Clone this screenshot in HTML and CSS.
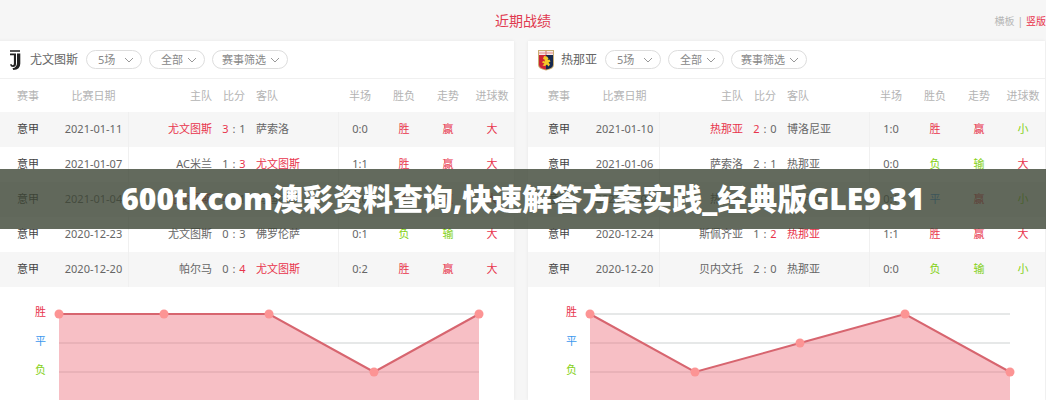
FILE: index.html
```html
<!DOCTYPE html>
<html lang="zh-CN">
<head>
<meta charset="utf-8">
<meta name="viewport" content="width=device-width, initial-scale=1">
<title>近期战绩</title>
<link rel="stylesheet" href="styles.css">
</head>
<body>
<header class="topbar">
  <h2 class="section-title">近期战绩</h2>
  <nav class="modes"><a href="#h">横板</a><span>|</span><a href="#v" class="active">竖版</a></nav>
</header>
<main class="panels">
  <section class="panel">
    <div class="team-bar">
      <svg class="crest" viewBox="0 0 16 22" aria-hidden="true"><path d="M3 1h10v2H3z" fill="#555"/><path d="M3 4.500h6v10.500q0 3-3 3-2.500 0-3-2.500l1.500-.5q.3 1.200 1.300 1.200 1.100 0 1.100-1.700V6.300H3z" fill="#222"/><path d="M10 4.500h3.300v10q0 6-7 6.500l-.8-1.700Q10 18.500 10 14z" fill="#222"/></svg>
      <h3 class="team">尤文图斯</h3>
      <div class="filters">
        <span class="pill"><select class="games" aria-label="场数"><option>5场</option></select><svg viewBox="0 0 10 6"><path d="M1 1l4 4 4-4"/></svg></span>
        <span class="pill"><select class="venue" aria-label="主客场"><option>全部</option></select><svg viewBox="0 0 10 6"><path d="M1 1l4 4 4-4"/></svg></span>
        <span class="pill"><select class="league" aria-label="赛事"><option>赛事筛选</option></select><svg viewBox="0 0 10 6"><path d="M1 1l4 4 4-4"/></svg></span>
      </div>
    </div>
    <table class="results">
      <colgroup><col class="c-league"><col class="c-date"><col class="c-home"><col class="c-score"><col><col class="c-mark"><col class="c-mark"><col class="c-mark"><col class="c-mark"></colgroup>
      <thead><tr><th>赛事</th><th>比赛日期</th><th class="home">主队</th><th>比分</th><th class="away">客队</th><th>半场</th><th>胜负</th><th>走势</th><th>进球数</th></tr></thead>
      <tbody>
        <tr><td class="lg">意甲</td><td class="date">2021-01-11</td><td class="home red">尤文图斯</td><td class="score"><b class="red">3</b> : <b>1</b></td><td class="away">萨索洛</td><td class="half">0:0</td><td class="red">胜</td><td class="red">赢</td><td class="red">大</td></tr>
        <tr><td class="lg">意甲</td><td class="date">2021-01-07</td><td class="home">AC米兰</td><td class="score"><b>1</b> : <b class="red">3</b></td><td class="away red">尤文图斯</td><td class="half">1:1</td><td class="red">胜</td><td class="red">赢</td><td class="red">大</td></tr>
        <tr><td class="lg">意甲</td><td class="date">2021-01-04</td><td class="home red">尤文图斯</td><td class="score"><b class="red">4</b> : <b>1</b></td><td class="away">乌迪内斯</td><td class="half">2:0</td><td class="red">胜</td><td class="red">赢</td><td class="red">大</td></tr>
        <tr><td class="lg">意甲</td><td class="date">2020-12-23</td><td class="home">尤文图斯</td><td class="score"><b>0</b> : <b>3</b></td><td class="away">佛罗伦萨</td><td class="half">0:1</td><td class="green">负</td><td class="green">输</td><td class="red">大</td></tr>
        <tr><td class="lg">意甲</td><td class="date">2020-12-20</td><td class="home">帕尔马</td><td class="score"><b>0</b> : <b class="red">4</b></td><td class="away red">尤文图斯</td><td class="half">0:2</td><td class="red">胜</td><td class="red">赢</td><td class="red">大</td></tr>
      </tbody>
    </table>
    <div class="chart">
      <div class="axis"><span class="red">胜</span><span class="blue">平</span><span class="green">负</span></div>
      <svg class="plot" role="img" aria-label="尤文图斯走势">
        <g class="grid"><line x1="0" x2="100%" y1="27" y2="27"/><line x1="0" x2="100%" y1="56" y2="56"/><line x1="0" x2="100%" y1="85" y2="85"/></g>
        <svg width="100%" height="113" viewBox="0 0 400 113" preserveAspectRatio="none"><path class="area" d="M0 27H200L300 85 400 27V113H0z"/><path class="trend" d="M0 27H200L300 85 400 27"/></svg>
        <g class="dots"><circle cx="0" cy="27" r="4.500"/><circle cx="25%" cy="27" r="4.500"/><circle cx="50%" cy="27" r="4.500"/><circle cx="75%" cy="85" r="4.500"/><circle cx="100%" cy="27" r="4.500"/></g>
      </svg>
    </div>
  </section>
  <section class="panel">
    <div class="team-bar">
      <svg class="crest" viewBox="0 0 16 22" aria-hidden="true"><path d="M0 1h16v15q0 4-8 5.500Q0 20 0 16z" fill="#c9ad72"/><path d="M1 6h7v14.500Q1 19 1 16z" fill="#ce2434"/><path d="M8 6h7v10q0 3-7 4.500z" fill="#16294f"/><path d="M1 2h14v4H1z" fill="#f8e8e6"/><path d="M7.300 2h1.400v4H7.300zM1 3.500h14v1H1z" fill="#df8b8b"/><path d="M6 7l3 .5 1.500 2-1 1.500 2-.5 1 2-2 1 1.500 2-1.500 2-1.500-2-2 1.500-2.500-.5 2-2-2.500-1 1-1.500 2 .5-.5-2-1.500-.5z" fill="#f5c928"/></svg>
      <h3 class="team">热那亚</h3>
      <div class="filters">
        <span class="pill"><select class="games" aria-label="场数"><option>5场</option></select><svg viewBox="0 0 10 6"><path d="M1 1l4 4 4-4"/></svg></span>
        <span class="pill"><select class="venue" aria-label="主客场"><option>全部</option></select><svg viewBox="0 0 10 6"><path d="M1 1l4 4 4-4"/></svg></span>
        <span class="pill"><select class="league" aria-label="赛事"><option>赛事筛选</option></select><svg viewBox="0 0 10 6"><path d="M1 1l4 4 4-4"/></svg></span>
      </div>
    </div>
    <table class="results">
      <colgroup><col class="c-league"><col class="c-date"><col class="c-home"><col class="c-score"><col><col class="c-mark"><col class="c-mark"><col class="c-mark"><col class="c-mark"></colgroup>
      <thead><tr><th>赛事</th><th>比赛日期</th><th class="home">主队</th><th>比分</th><th class="away">客队</th><th>半场</th><th>胜负</th><th>走势</th><th>进球数</th></tr></thead>
      <tbody>
        <tr><td class="lg">意甲</td><td class="date">2021-01-10</td><td class="home red">热那亚</td><td class="score"><b class="red">2</b> : <b>0</b></td><td class="away">博洛尼亚</td><td class="half">1:0</td><td class="red">胜</td><td class="red">赢</td><td class="green">小</td></tr>
        <tr><td class="lg">意甲</td><td class="date">2021-01-06</td><td class="home">萨索洛</td><td class="score"><b>2</b> : <b>1</b></td><td class="away">热那亚</td><td class="half">0:0</td><td class="green">负</td><td class="green">输</td><td class="red">大</td></tr>
        <tr><td class="lg">意甲</td><td class="date">2021-01-03</td><td class="home">热那亚</td><td class="score"><b>1</b> : <b>1</b></td><td class="away">拉齐奥</td><td class="half">0:1</td><td class="blue">平</td><td class="red">赢</td><td class="green">小</td></tr>
        <tr><td class="lg">意甲</td><td class="date">2020-12-24</td><td class="home">斯佩齐亚</td><td class="score"><b>1</b> : <b class="red">2</b></td><td class="away red">热那亚</td><td class="half">1:1</td><td class="red">胜</td><td class="red">赢</td><td class="red">大</td></tr>
        <tr><td class="lg">意甲</td><td class="date">2020-12-20</td><td class="home">贝内文托</td><td class="score"><b>2</b> : <b>0</b></td><td class="away">热那亚</td><td class="half">0:0</td><td class="green">负</td><td class="green">输</td><td class="green">小</td></tr>
      </tbody>
    </table>
    <div class="chart">
      <div class="axis"><span class="red">胜</span><span class="blue">平</span><span class="green">负</span></div>
      <svg class="plot" role="img" aria-label="热那亚走势">
        <g class="grid"><line x1="0" x2="100%" y1="27" y2="27"/><line x1="0" x2="100%" y1="56" y2="56"/><line x1="0" x2="100%" y1="85" y2="85"/></g>
        <svg width="100%" height="113" viewBox="0 0 400 113" preserveAspectRatio="none"><path class="area" d="M0 27L100 85 200 56 300 27 400 85V113H0z"/><path class="trend" d="M0 27L100 85 200 56 300 27 400 85"/></svg>
        <g class="dots"><circle cx="0" cy="27" r="4.500"/><circle cx="25%" cy="85" r="4.500"/><circle cx="50%" cy="56" r="4.500"/><circle cx="75%" cy="27" r="4.500"/><circle cx="100%" cy="85" r="4.500"/></g>
      </svg>
    </div>
  </section>
</main>
<h1 class="banner">600tkcom澳彩资料查询,快速解答方案实践_经典版GLE9.31</h1>
</body>
</html>
```
FILE: styles.css
```css
* { box-sizing: border-box; }
body {
  margin: 0;
  position: relative;
  overflow-x: hidden;
  background: #f6f6f6;
  color: #666;
  font: 11px/16px "Noto Sans", "Noto Sans CJK SC", sans-serif;
}
h1, h2, h3 { margin: 0; font-weight: 400; }

.topbar {
  display: grid;
  grid-template-columns: 1fr auto 1fr;
  align-items: center;
  height: 41px;
}
.section-title {
  grid-column: 2;
  color: #e0394f;
  font-size: 14px;
  line-height: 20px;
}
.modes {
  display: flex;
  justify-content: flex-end;
  gap: 3px;
  color: #aaa;
  font-size: 10px;
}
.modes a { color: #b5b5b5; text-decoration: none; }
.modes .active { color: #e8344c; }

.panels {
  display: grid;
  grid-template-columns: 1fr 1fr;
  gap: 14px;
  margin: 0 1px 0 -3px;
}
.panel { background: #fff; box-shadow: 0 0 3px #e6e6e6; }

.team-bar {
  display: flex;
  align-items: center;
  height: 38px;
  padding-left: 10px;
  border-bottom: 1px solid #f0f0f0;
}
.crest { width: 16px; height: 22px; }
.team { margin: 0 8px 0 7px; color: #666; font-size: 12px; }
.filters { display: flex; gap: 7px; }
.pill { display: grid; align-items: center; }
.pill select, .pill svg { grid-area: 1 / 1; }
.pill select {
  appearance: none;
  width: 56px;
  height: 19px;
  padding: 0 0 0 11px;
  border: 1px solid #ddd;
  border-radius: 10px;
  background: #fff;
  color: #888;
  font: inherit;
  font-size: 11px;
}
.pill .league { width: 76px; padding-left: 9px; }
.pill svg {
  justify-self: end;
  width: 10px;
  height: 6px;
  margin-right: 8px;
  fill: none;
  stroke: #999;
  pointer-events: none;
}

.results { width: 100%; table-layout: fixed; border-spacing: 0; }
.c-league { width: 62px; }
.c-date { width: 69px; }
.c-home { width: 84px; }
.c-score { width: 44px; }
.c-mark { width: 44px; }
.results th, .results td {
  height: 35px;
  padding: 0;
  font-weight: 400;
  text-align: center;
  white-space: nowrap;
}
.results td { padding-bottom: 2px; }
.results th { height: 33px; color: #b4b4b4; }
.results tbody tr:nth-child(odd) { background: #f6f6f6; }
.results .home { text-align: right; }
.results .away { text-align: left; }
.results .lg { color: #444; }
.results td.home, .results .half { box-shadow: inset 1px 0 #f0f0f0; }
.score b { margin: 0 1px; font-weight: 400; }

.results .red, .red { color: #e8344c; }
.results .green, .green { color: #85d116; }
.results .blue, .blue { color: #3c98ee; }

.chart { display: flex; gap: 13px; padding: 0 35px 0 38px; }
.axis {
  display: flex;
  flex-direction: column;
  gap: 13px;
  padding-top: 17px;
}
.plot { flex: 1; min-width: 0; height: 113px; overflow: visible; }
.grid line { stroke: #e6e8e8; stroke-width: 2; }
.area { fill: #ec6a78; fill-opacity: .43; }
.trend {
  fill: none;
  stroke: #d7656f;
  stroke-width: 2;
  vector-effect: non-scaling-stroke;
}
.dots { fill: #fc9494; }

.banner {
  position: absolute;
  top: 169px;
  left: 0;
  right: 0;
  background: rgba(60, 69, 52, .8);
  color: #fff;
  font-family: "Open Sans", "Noto Sans CJK SC", sans-serif;
  font-size: 30px;
  font-weight: 800;
  line-height: 60px;
  text-align: center;
  white-space: nowrap;
}
```
